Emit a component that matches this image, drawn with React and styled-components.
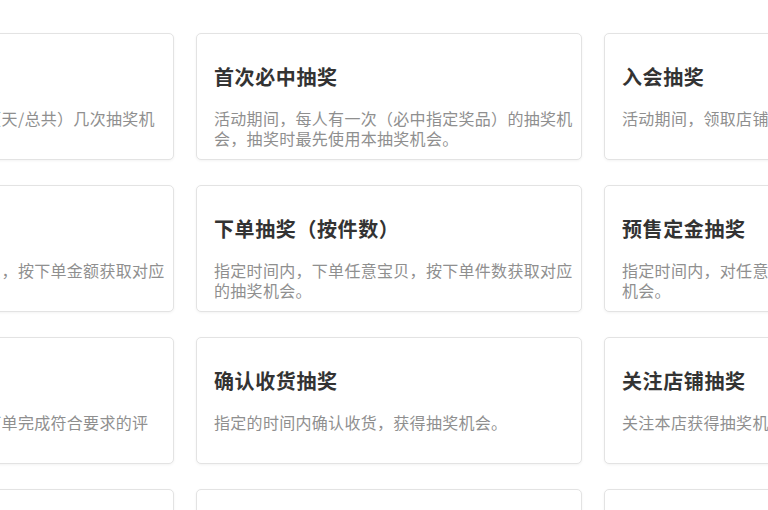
import React from 'react';
import styled, { createGlobalStyle } from 'styled-components';

const GlobalStyle = createGlobalStyle`
  html, body {
    margin: 0;
    padding: 0;
    background: #ffffff;
    overflow: hidden;
  }
  body {
    font-family: "Noto Sans CJK SC", "Noto Sans", sans-serif;
  }
`;

const Viewport = styled.div`
  width: 768px;
  height: 510px;
  overflow: hidden;
`;

const CardGrid = styled.div`
  display: grid;
  grid-template-columns: repeat(3, 386px);
  column-gap: 22px;
  row-gap: 25px;
  padding-top: 33px;
  margin-left: -212px;
`;

const Card = styled.div`
  box-sizing: border-box;
  height: 127px;
  padding: 29px 8px 0 17px;
  background: #fff;
  border: 1px solid #e3e3e3;
  border-radius: 5px;
  box-shadow: 0 1px 3px rgba(0, 0, 0, 0.05);
  overflow: hidden;
`;

const CardTitle = styled.h3`
  margin: 0 0 18px;
  font-size: 20px;
  line-height: 28px;
  font-weight: 700;
  letter-spacing: 0.6px;
  color: #333;
  white-space: nowrap;
`;

const CardDesc = styled.p`
  margin: 0;
  font-size: 16px;
  line-height: 19.5px;
  letter-spacing: 0.3px;
  color: #8f8f8f;
`;

const types = [
  {
    title: '每日抽奖',
    desc: '活动期间，每人可获得每（天/总共）几次抽奖机会。'
  },
  {
    title: '首次必中抽奖',
    desc: '活动期间，每人有一次（必中指定奖品）的抽奖机会，抽奖时最先使用本抽奖机会。'
  },
  {
    title: '入会抽奖',
    desc: '活动期间，领取店铺会员卡获得抽奖机会。'
  },
  {
    title: '下单抽奖（按金额）',
    desc: '指定时间内，下单任意宝贝，按下单金额获取对应的抽奖机会。'
  },
  {
    title: '下单抽奖（按件数）',
    desc: '指定时间内，下单任意宝贝，按下单件数获取对应的抽奖机会。'
  },
  {
    title: '预售定金抽奖',
    desc: '指定时间内，对任意预售宝贝支付定金，获得抽奖机会。'
  },
  {
    title: '评价抽奖',
    desc: '指定时间内，买家对已经下单完成符合要求的评价，获得抽奖机会。'
  },
  {
    title: '确认收货抽奖',
    desc: '指定的时间内确认收货，获得抽奖机会。'
  },
  {
    title: '关注店铺抽奖',
    desc: '关注本店获得抽奖机会。'
  },
  {
    title: '分享抽奖',
    desc: '分享活动给好友，获得抽奖机会。'
  },
  {
    title: '收藏宝贝抽奖',
    desc: '收藏指定宝贝，获得抽奖机会。'
  },
  {
    title: '加购抽奖',
    desc: '将指定宝贝加入购物车，获得抽奖机会。'
  }
];

const App = () => (
  <>
    <GlobalStyle />
    <Viewport>
      <CardGrid>
        {types.map((item, index) => (
          <Card key={index}>
            <CardTitle>{item.title}</CardTitle>
            <CardDesc>{item.desc}</CardDesc>
          </Card>
        ))}
      </CardGrid>
    </Viewport>
  </>
);

export default App;
